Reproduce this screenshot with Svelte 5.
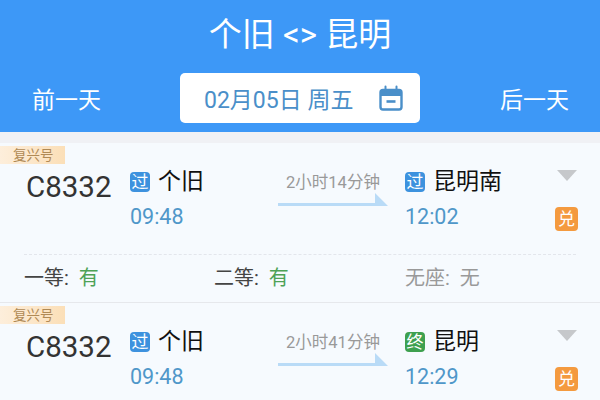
<script>
  const trains = [
    { no: 'C8332', fromTag: '过', from: '个旧', dep: '09:48', dur: '2小时14分钟', toTag: '过', to: '昆明南', arr: '12:02', end: false, seats: true },
    { no: 'C8332', fromTag: '过', from: '个旧', dep: '09:48', dur: '2小时41分钟', toTag: '终', to: '昆明', arr: '12:29', end: true, seats: false }
  ];
</script>

<div class="page">
  <header class="head">
    <div class="title">个旧 &lt;&gt; 昆明</div>
    <div class="nav">
      <span class="day">前一天</span>
      <div class="date">
        <span>02月05日 周五</span>
        <svg width="26" height="26" viewBox="0 0 26 26" fill="none" stroke="#4a8fc9" stroke-width="2.4">
          <rect x="2.5" y="5" width="21" height="19.5" rx="2.5" />
          <path d="M2.5 8.5h21" stroke-width="5" />
          <path d="M7.5 1.5v5M18.5 1.5v5" stroke-width="2" stroke-linecap="round" />
          <path d="M8.5 16.5h9" stroke-width="2.6" />
        </svg>
      </div>
      <span class="day">后一天</span>
    </div>
  </header>

  {#each trains as t}
    <section class="card">
      <div class="badge">复兴号</div>
      <div class="main">
        <div class="no">{t.no}</div>
        <div class="stop">
          <div class="name"><i class="tag">{t.fromTag}</i>{t.from}</div>
          <div class="time">{t.dep}</div>
        </div>
        <div class="dur">
          <span>{t.dur}</span>
          <svg class="arrow" width="110" height="14" viewBox="0 0 110 14">
            <polygon points="97,0 110,13 0,13 0,10 97,10" fill="#b9dbf7" />
          </svg>
        </div>
        <div class="stop to">
          <div class="name"><i class="tag" class:end={t.end}>{t.toTag}</i>{t.to}</div>
          <div class="time">{t.arr}</div>
        </div>
        <div class="side">
          <div class="caret"></div>
          <div class="dui">兑</div>
        </div>
      </div>
      {#if t.seats}
        <div class="seats">
          <div class="seat">一等: <b>有</b></div>
          <div class="seat">二等: <b>有</b></div>
          <div class="seat none">无座: <b>无</b></div>
        </div>
      {/if}
    </section>
  {/each}
</div>

<style>
  :global(body) {
    margin: 0;
  }

  .page {
    width: 600px;
    height: 400px;
    overflow: hidden;
    background: #f0f1f5;
    font-family: "Roboto", "Noto Sans CJK SC", sans-serif;
  }

  .head {
    height: 132px;
    box-sizing: border-box;
    padding-top: 12px;
    background: #3d98f7;
    color: #fff;
  }

  .title {
    text-align: center;
    font-size: 33px;
    line-height: 46px;
  }

  .nav {
    display: flex;
    align-items: center;
    justify-content: space-between;
    margin-top: 15px;
    padding: 0 32px;
  }

  .day {
    font-size: 23px;
    width: 68px;
    white-space: nowrap;
  }

  .date {
    width: 240px;
    height: 50px;
    box-sizing: border-box;
    display: flex;
    align-items: center;
    justify-content: space-between;
    padding: 0 16px 0 24px;
    border-radius: 5px;
    background: #fff;
    color: #4a8fc9;
    font-size: 23px;
  }

  .card {
    height: 160px;
    margin-top: 11px;
    padding-top: 3px;
    box-sizing: border-box;
    background: #f6fafe;
    border-bottom: 1px solid #e6e8ec;
  }

  .card + .card {
    margin-top: 0;
  }

  .badge {
    width: 65px;
    height: 18px;
    padding: 2px 0 0 13px;
    box-sizing: border-box;
    background: linear-gradient(90deg, #fdeedb, #fbdfb8);
    color: #b08a55;
    font-size: 13.5px;
    line-height: 15px;
  }

  .main {
    display: flex;
    height: 90px;
    padding-left: 26px;
  }

  .no {
    width: 104px;
    padding-top: 3px;
    font-size: 29.5px;
    line-height: 40px;
    color: #333;
  }

  .stop {
    width: 148px;
    padding-top: 1px;
  }

  .stop.to {
    width: 150px;
  }

  .name {
    display: flex;
    align-items: center;
    gap: 8px;
    font-size: 23px;
    line-height: 34px;
    color: #111;
  }

  .tag {
    width: 20px;
    height: 20px;
    border-radius: 4px;
    background: #3d92de;
    color: #fff;
    font-size: 17px;
    line-height: 20px;
    font-style: normal;
    text-align: center;
  }

  .tag.end {
    background: #3ea04f;
  }

  .time {
    margin-top: 3px;
    color: #4f97c9;
    font-size: 21.5px;
    line-height: 30px;
  }

  .dur {
    width: 127px;
    box-sizing: border-box;
    padding: 9px 17px 0 0;
    color: #999;
    font-size: 16.5px;
    line-height: 20px;
    text-align: center;
  }

  .dur span {
    display: block;
    white-space: nowrap;
  }

  .arrow {
    display: block;
  }

  .side {
    width: 23px;
    display: flex;
    flex-direction: column;
    align-items: center;
  }

  .caret {
    width: 0;
    height: 0;
    margin-top: 6px;
    border-left: 10px solid transparent;
    border-right: 10px solid transparent;
    border-top: 11px solid #c6c8cb;
  }

  .dui {
    width: 23px;
    height: 24px;
    margin-top: 26px;
    border-radius: 4px;
    background: #f49a3f;
    color: #fff;
    font-size: 17px;
    line-height: 24px;
    text-align: center;
  }

  .seats {
    display: grid;
    grid-template-columns: 190px 191px 1fr;
    margin: 0 24px;
    padding-top: 8px;
    border-top: 1px dashed #e3e6ec;
    font-size: 20px;
    line-height: 30px;
    color: #444;
  }

  .seat b {
    font-weight: 400;
    margin-left: 5px;
    color: #4ea256;
  }

  .seat.none,
  .seat.none b {
    color: #999;
  }
</style>
